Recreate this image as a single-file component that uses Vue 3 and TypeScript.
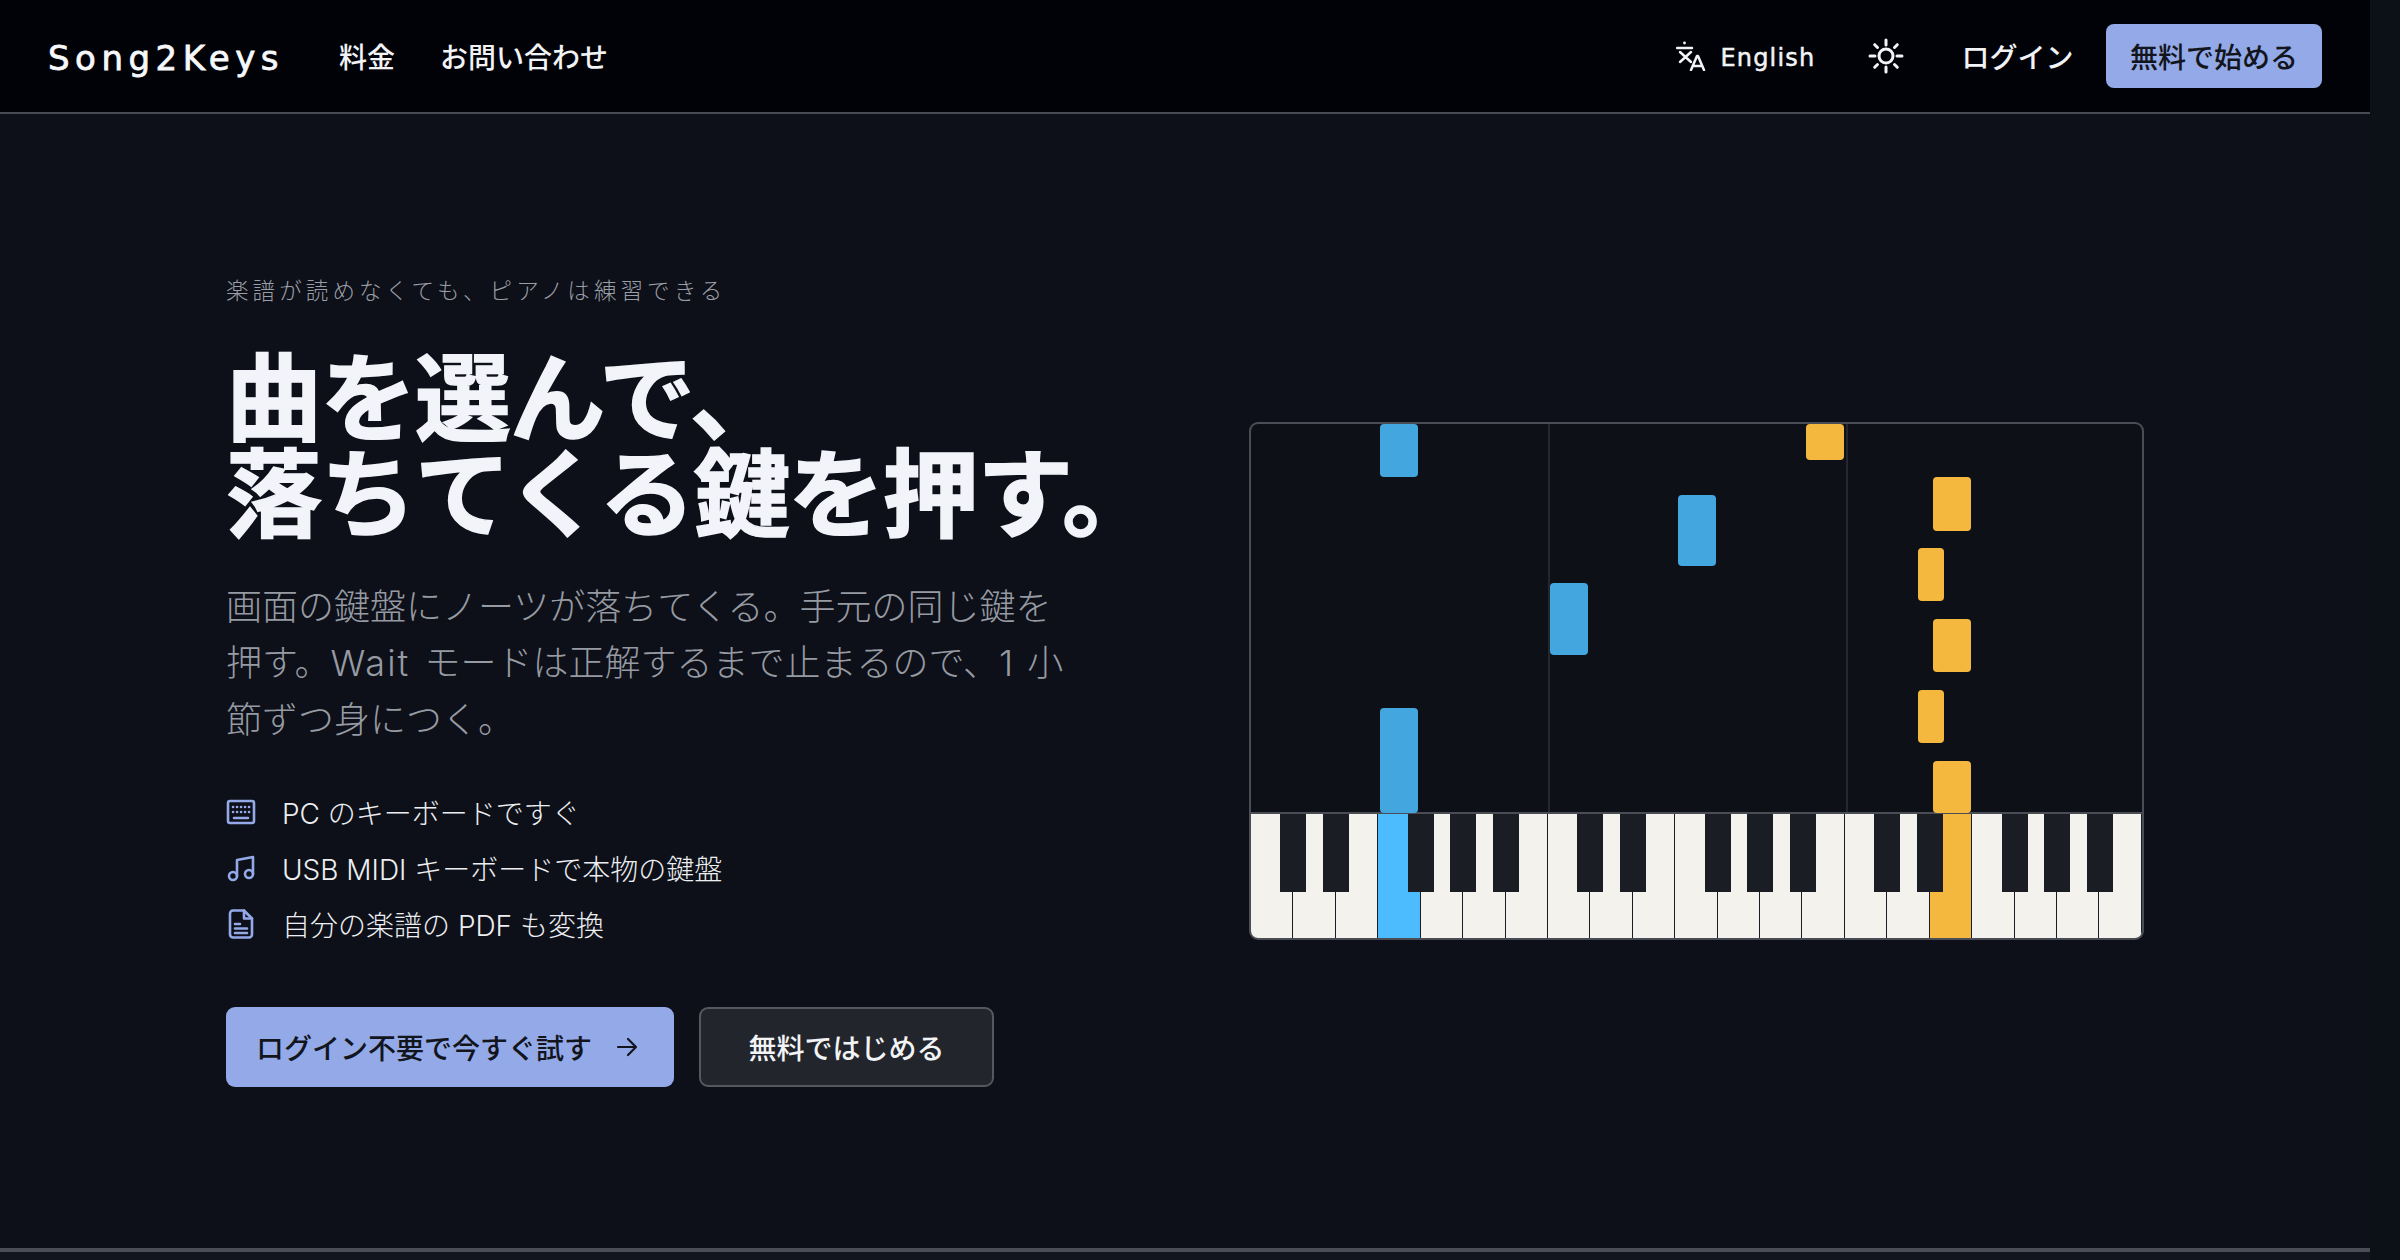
<template>
  <div class="screen">
    <div class="page">
      <header class="topbar">
        <div class="nav-left">
          <span class="logo">Song2Keys</span>
          <a class="nav-link">料金</a>
          <a class="nav-link">お問い合わせ</a>
        </div>
        <div class="nav-right">
          <button class="lang-btn">
            <svg class="lang-icon" viewBox="0 0 30 30" fill="none" stroke="currentColor" stroke-width="2.5" stroke-linecap="round" stroke-linejoin="round">
              <path d="M1 7h15" />
              <circle cx="8.5" cy="2" r="1.4" fill="currentColor" stroke="none" />
              <path d="M4 11l11 10M15 11L4 21" />
              <path d="M15 29l6-14h1l6 14M17 25h9" />
            </svg>
            <span class="lang-label">English</span>
          </button>
          <svg class="sun-icon" viewBox="0 0 36 36" fill="none" stroke="currentColor" stroke-width="3" stroke-linecap="round">
            <circle cx="18" cy="18" r="7" />
            <path d="M18 2v5M18 29v5M2 18h5M29 18h5M6.7 6.7l2.8 2.8M26.5 26.5l2.8 2.8M6.7 29.3l2.8-2.8M26.5 9.5l2.8-2.8" />
          </svg>
          <a class="nav-link login">ログイン</a>
          <button class="start-btn">無料で始める</button>
        </div>
      </header>

      <main class="hero">
        <section class="hero-copy">
          <p class="eyebrow">楽譜が読めなくても、ピアノは練習できる</p>
          <h1>曲を選んで、<br />落ちてくる鍵を押す。</h1>
          <p class="lead">画面の鍵盤にノーツが落ちてくる。手元の同じ鍵を押す。<span class="latin">Wait</span> モードは正解するまで止まるので、1 小節ずつ身につく。</p>
          <ul class="features">
            <li>
              <svg viewBox="0 0 30 30" fill="none" stroke="currentColor" stroke-width="2.6" stroke-linecap="round" stroke-linejoin="round">
                <rect x="2" y="4" width="26" height="22" rx="2" />
                <path d="M7 10h.1M11 10h.1M15 10h.1M19 10h.1M23 10h.1M7 15h.1M11 15h.1M15 15h.1M19 15h.1M23 15h.1M8 21h14" />
              </svg>
              <span>PC のキーボードですぐ</span>
            </li>
            <li>
              <svg viewBox="0 0 30 30" fill="none" stroke="currentColor" stroke-width="2.6" stroke-linecap="round" stroke-linejoin="round">
                <circle cx="7" cy="23" r="4" />
                <circle cx="23" cy="21" r="4" />
                <path d="M11 23V7l16-3v17" />
              </svg>
              <span>USB MIDI キーボードで本物の鍵盤</span>
            </li>
            <li>
              <svg viewBox="0 0 30 30" fill="none" stroke="currentColor" stroke-width="2.6" stroke-linecap="round" stroke-linejoin="round">
                <path d="M18 1.5H7a3 3 0 0 0-3 3v21a3 3 0 0 0 3 3h16a3 3 0 0 0 3-3V9.5z" />
                <path d="M18 1.5v8h8M9 15h5M9 19.5h12M9 24h12" />
              </svg>
              <span>自分の楽譜の PDF も変換</span>
            </li>
          </ul>
          <div class="actions">
            <button class="btn primary">
              <span>ログイン不要で今すぐ試す</span>
              <svg class="arrow" viewBox="0 0 22 20" fill="none" stroke="currentColor" stroke-width="2.2" stroke-linecap="round" stroke-linejoin="round">
                <path d="M2 10h18M12 2l8 8-8 8" />
              </svg>
            </button>
            <button class="btn secondary">無料ではじめる</button>
          </div>
        </section>

        <section class="piano">
          <div class="roll">
            <span class="bar" v-for="b in bars" :key="b" :style="{ left: b + 'px' }"></span>
            <span
              v-for="(n, i) in notes"
              :key="i"
              class="note"
              :class="n.color"
              :style="{ left: n.x + 'px', top: n.y + 'px', width: n.w + 'px', height: n.h + 'px' }"
            ></span>
          </div>
          <div class="keys">
            <span v-for="i in 21" :key="i" class="white-key" :class="keyClass(i - 1)"></span>
            <span
              v-for="b in blackKeys"
              :key="b"
              class="black-key"
              :style="{ left: (b * keyWidth - 13) + 'px' }"
            ></span>
          </div>
        </section>
      </main>

      <div class="next-section"></div>
    </div>
    <div class="scroll-strip"></div>
  </div>
</template>

<script setup lang="ts">
interface Note {
  x: number
  y: number
  w: number
  h: number
  color: 'blue' | 'gold'
}

const keyWidth = 891 / 21
const bars = [297, 595]
const blackKeys = [1, 2, 4, 5, 6, 8, 9, 11, 12, 13, 15, 16, 18, 19, 20]

// coordinates inside the falling-notes area
const notes: Note[] = [
  { x: 129, y: 0, w: 38, h: 53, color: 'blue' },
  { x: 427, y: 71, w: 38, h: 71, color: 'blue' },
  { x: 299, y: 159, w: 38, h: 72, color: 'blue' },
  { x: 129, y: 284, w: 38, h: 105, color: 'blue' },
  { x: 555, y: 0, w: 38, h: 36, color: 'gold' },
  { x: 682, y: 53, w: 38, h: 54, color: 'gold' },
  { x: 667, y: 124, w: 26, h: 53, color: 'gold' },
  { x: 682, y: 195, w: 38, h: 53, color: 'gold' },
  { x: 667, y: 266, w: 26, h: 53, color: 'gold' },
  { x: 682, y: 337, w: 38, h: 52, color: 'gold' }
]

const keyClass = (i: number) => {
  if (i === 3) return 'lit-blue'
  if (i === 16) return 'lit-gold'
  return ''
}
</script>

<style>
html,
body {
  margin: 0;
  height: 1260px;
  overflow: hidden;
  background: #0d1018;
}
</style>

<style scoped>
.screen {
  display: flex;
  width: 2400px;
  height: 1260px;
  font-family: Inter, "Noto Sans CJK JP", sans-serif;
  color: #f2f3f5;
}

.page {
  width: 2370px;
  display: flex;
  flex-direction: column;
  background: #0d1018;
}

.scroll-strip {
  width: 30px;
  background: #0c1017;
}

.topbar {
  height: 112px;
  flex-shrink: 0;
  display: flex;
  justify-content: space-between;
  align-items: center;
  padding: 0 48px;
  background: #010208;
  border-bottom: 2px solid #474a52;
}

.nav-left,
.nav-right {
  display: flex;
  align-items: center;
}

.logo {
  font-family: "DejaVu Sans", sans-serif;
  font-size: 34px;
  letter-spacing: 5.5px;
  -webkit-text-stroke: 0.8px #f7f8fa;
  margin-right: 55px;
  padding-top: 3px;
  color: #f7f8fa;
}

.nav-link {
  font-size: 28px;
  font-weight: 500;
  color: #f2f3f5;
  margin-right: 45px;
}

.nav-left .nav-link:last-child {
  margin-right: 0;
}

.lang-btn {
  display: flex;
  align-items: center;
  gap: 14px;
  padding: 0;
  border: none;
  background: none;
  color: #f2f3f5;
  font-family: "DejaVu Sans", sans-serif;
  font-size: 24px;
  letter-spacing: 1.2px;
  -webkit-text-stroke: 0.5px #f2f3f5;
  margin-right: 52.5px;
}

.lang-label {
  padding-top: 3px;
}

.lang-icon {
  width: 30px;
  height: 30px;
}

.sun-icon {
  width: 36px;
  height: 36px;
  margin-right: 57.5px;
}

.login {
  margin-right: 32.5px;
}

.start-btn {
  height: 64px;
  padding: 0 24px;
  border: none;
  border-radius: 8px;
  background: #93a9e8;
  color: #12151c;
  font-family: inherit;
  font-size: 28px;
  font-weight: 500;
}

.hero {
  flex: 1;
  display: grid;
  grid-template-columns: 894px 895px;
  column-gap: 129px;
  align-items: center;
  padding: 0 226px;
}

.eyebrow {
  margin: 0 0 43.5px;
  font-size: 22.5px;
  letter-spacing: 4.1px;
  line-height: 32px;
  color: #9a9ea6;
  font-weight: 300;
}

h1 {
  margin: 0 0 36.5px;
  font-size: 96px;
  line-height: 96px;
  letter-spacing: -1.5px;
  font-weight: 700;
  -webkit-text-stroke: 1.5px #f2f4f9;
  white-space: nowrap;
  color: #f2f4f9;
}

.lead {
  margin: 0 0 43.5px;
  max-width: 855px;
  font-size: 36px;
  line-height: 56.5px;
  font-weight: 300;
  word-spacing: 4px;
  color: #969aa2;
}

.latin {
  letter-spacing: 2px;
}

.features {
  list-style: none;
  margin: 0 0 63.5px;
  padding: 0;
  display: flex;
  flex-direction: column;
  gap: 16px;
}

.features li {
  display: flex;
  align-items: center;
  gap: 26px;
  height: 40px;
  font-size: 28px;
  font-weight: 300;
  color: #eceef1;
}

.features svg {
  width: 30px;
  height: 30px;
  color: #93a9e8;
}

.actions {
  display: flex;
  gap: 25px;
}

.btn {
  height: 80px;
  display: flex;
  align-items: center;
  border-radius: 9px;
  font-family: inherit;
  font-size: 28px;
  font-weight: 500;
  box-sizing: border-box;
}

.primary {
  width: 448px;
  padding: 0 30px;
  gap: 24px;
  border: none;
  background: #93a9e8;
  color: #12151c;
}

.arrow {
  width: 22px;
  height: 20px;
}

.secondary {
  width: 295px;
  justify-content: center;
  border: 2px solid #55585f;
  background: #22252c;
  color: #f2f3f5;
}

.piano {
  height: 518px;
  box-sizing: border-box;
  display: flex;
  flex-direction: column;
  border: 2px solid #4a4d55;
  border-radius: 9px;
  overflow: hidden;
  background: #0d1117;
}

.roll {
  position: relative;
  flex: 1;
  border-bottom: 2px solid #4a4d55;
}

.bar {
  position: absolute;
  top: 0;
  bottom: 0;
  width: 2px;
  background: #24272e;
}

.note {
  position: absolute;
  border-radius: 4px;
}

.note.blue {
  background: #43a6de;
}

.note.gold {
  background: #f5b83f;
}

.keys {
  position: relative;
  height: 124px;
  display: flex;
  flex-shrink: 0;
}

.white-key {
  flex: 1;
  background: #f4f2ec;
  border-right: 1.5px solid #1a1d24;
  box-sizing: border-box;
}

.white-key:last-of-type {
  border-right: none;
}

.lit-blue {
  background: #4dbcff;
}

.lit-gold {
  background: #f5b83f;
}

.black-key {
  position: absolute;
  top: 0;
  width: 26px;
  height: 78px;
  background: #1a1d24;
}

.next-section {
  height: 12px;
  flex-shrink: 0;
  border-top: 4px solid #4a4d55;
  box-sizing: border-box;
  background: #12151d;
}
</style>
